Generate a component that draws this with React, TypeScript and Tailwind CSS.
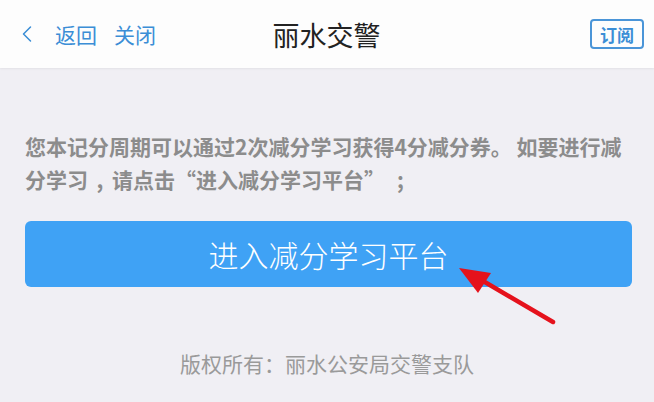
import { ChevronLeft } from 'lucide-react';

const cjk = 'font-["Noto_Sans_CJK_SC","Noto_Sans",sans-serif]';

export default function App() {
  return (
    <div className={`relative h-[402px] w-[654px] overflow-hidden bg-[#f0eff4] ${cjk}`}>
      {/* Header */}
      <div className="flex h-[68px] items-center bg-[#fdfdfd] pl-[13px] pr-[10px] shadow-[0_1px_2px_rgba(0,0,0,0.06)]">
        <div className="flex w-[200px] items-center text-[#3b8ed6]">
          <ChevronLeft className="h-[32px] w-[28px]" strokeWidth={1.3} />
          <span className="ml-[14px] text-[21px] leading-none">返回</span>
          <span className="ml-[17px] text-[21px] leading-none">关闭</span>
        </div>
        <div className="-ml-[4px] flex-1 text-center text-[27px] leading-none text-[#222]">丽水交警</div>
        <div className="flex w-[200px] justify-end">
          <span className="flex h-[30px] w-[54px] items-center justify-center rounded-[4px] border-2 border-[#4a95d8] text-[17px] font-bold leading-none text-[#3b8ed6]">
            订阅
          </span>
        </div>
      </div>

      {/* Content */}
      <div className="px-[25px] pt-[62px]">
        <p className="text-[21px] font-bold leading-[33px] text-[#8c8c8c]">
          <span className="block whitespace-nowrap">您本记分周期可以通过2次减分学习获得4分减分券。 如要进行减</span>
          <span className="block whitespace-nowrap">
            分学习<span className="inline-block w-[24px] text-center">,</span>请点击“进入减分学习平台”
            <span className="ml-[12px]">;</span>
          </span>
        </p>

        <button className="mt-[25px] flex h-[66px] w-[607px] items-center justify-center rounded-[6px] bg-[#3fa2f5] text-[30px] font-light leading-none text-white">
          进入减分学习平台
        </button>

        <div className="mt-[66px] text-center text-[21px] leading-none text-[#9a9a9a]">
          版权所有：丽水公安局交警支队
        </div>
      </div>

      {/* Red annotation arrow */}
      <svg className="pointer-events-none absolute left-0 top-0" width="654" height="402">
        <line x1="553" y1="322" x2="478" y2="278" stroke="#e5121c" strokeWidth="4.5" strokeLinecap="round" />
        <polygon points="459,268 491,273 478,293" fill="#e5121c" />
      </svg>
    </div>
  );
}
